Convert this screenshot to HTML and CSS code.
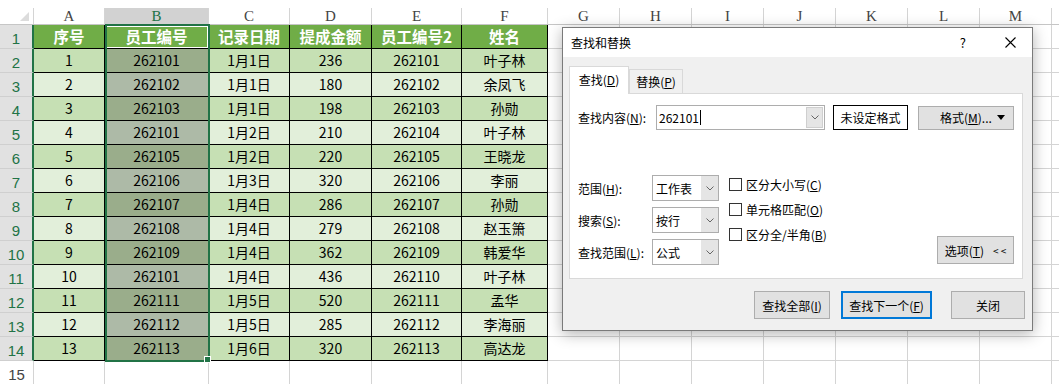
FILE: index.html
```html
<!DOCTYPE html>
<html lang="zh-CN">
<head>
    <meta charset="UTF-8">
    <title>查找和替换</title>
    <link rel="stylesheet" href="styles.css">
</head>
<body>

<div class="sheet">
    <!-- column letters -->
    <div class="colheads">
        <div class="corner"></div>
        <div class="ch w-a">A</div>
        <div class="ch w-b on">B</div>
        <div class="ch w-c">C</div>
        <div class="ch w-d">D</div>
        <div class="ch w-e">E</div>
        <div class="ch w-f">F</div>
        <div class="ch w-g">G</div>
        <div class="ch w-g">H</div>
        <div class="ch w-g">I</div>
        <div class="ch w-g">J</div>
        <div class="ch w-g">K</div>
        <div class="ch w-g">L</div>
        <div class="ch w-g">M</div>
    </div>

    <div class="row head">
        <div class="rh">1</div>
        <div class="c w-a">序号</div>
        <div class="c w-b active">员工编号</div>
        <div class="c w-c">记录日期</div>
        <div class="c w-d">提成金额</div>
        <div class="c w-e">员工编号2</div>
        <div class="c w-f">姓名</div>
        <div class="rest"></div>
    </div>
    <div class="row dk">
        <div class="rh">2</div>
        <div class="c w-a">1</div><div class="c w-b sel">262101</div><div class="c w-c">1月1日</div>
        <div class="c w-d">236</div><div class="c w-e">262101</div><div class="c w-f">叶子林</div>
        <div class="rest"></div>
    </div>
    <div class="row lt">
        <div class="rh">3</div>
        <div class="c w-a">2</div><div class="c w-b sel">262102</div><div class="c w-c">1月1日</div>
        <div class="c w-d">180</div><div class="c w-e">262102</div><div class="c w-f">余凤飞</div>
        <div class="rest"></div>
    </div>
    <div class="row dk">
        <div class="rh">4</div>
        <div class="c w-a">3</div><div class="c w-b sel">262103</div><div class="c w-c">1月1日</div>
        <div class="c w-d">198</div><div class="c w-e">262103</div><div class="c w-f">孙勋</div>
        <div class="rest"></div>
    </div>
    <div class="row lt">
        <div class="rh">5</div>
        <div class="c w-a">4</div><div class="c w-b sel">262101</div><div class="c w-c">1月2日</div>
        <div class="c w-d">210</div><div class="c w-e">262104</div><div class="c w-f">叶子林</div>
        <div class="rest"></div>
    </div>
    <div class="row dk">
        <div class="rh">6</div>
        <div class="c w-a">5</div><div class="c w-b sel">262105</div><div class="c w-c">1月2日</div>
        <div class="c w-d">220</div><div class="c w-e">262105</div><div class="c w-f">王晓龙</div>
        <div class="rest"></div>
    </div>
    <div class="row lt">
        <div class="rh">7</div>
        <div class="c w-a">6</div><div class="c w-b sel">262106</div><div class="c w-c">1月3日</div>
        <div class="c w-d">320</div><div class="c w-e">262106</div><div class="c w-f">李丽</div>
        <div class="rest"></div>
    </div>
    <div class="row dk">
        <div class="rh">8</div>
        <div class="c w-a">7</div><div class="c w-b sel">262107</div><div class="c w-c">1月4日</div>
        <div class="c w-d">286</div><div class="c w-e">262107</div><div class="c w-f">孙勋</div>
        <div class="rest"></div>
    </div>
    <div class="row lt">
        <div class="rh">9</div>
        <div class="c w-a">8</div><div class="c w-b sel">262108</div><div class="c w-c">1月4日</div>
        <div class="c w-d">279</div><div class="c w-e">262108</div><div class="c w-f">赵玉箫</div>
        <div class="rest"></div>
    </div>
    <div class="row dk">
        <div class="rh">10</div>
        <div class="c w-a">9</div><div class="c w-b sel">262109</div><div class="c w-c">1月4日</div>
        <div class="c w-d">362</div><div class="c w-e">262109</div><div class="c w-f">韩爱华</div>
        <div class="rest"></div>
    </div>
    <div class="row lt">
        <div class="rh">11</div>
        <div class="c w-a">10</div><div class="c w-b sel">262101</div><div class="c w-c">1月4日</div>
        <div class="c w-d">436</div><div class="c w-e">262110</div><div class="c w-f">叶子林</div>
        <div class="rest"></div>
    </div>
    <div class="row dk">
        <div class="rh">12</div>
        <div class="c w-a">11</div><div class="c w-b sel">262111</div><div class="c w-c">1月5日</div>
        <div class="c w-d">520</div><div class="c w-e">262111</div><div class="c w-f">孟华</div>
        <div class="rest"></div>
    </div>
    <div class="row lt">
        <div class="rh">13</div>
        <div class="c w-a">12</div><div class="c w-b sel">262112</div><div class="c w-c">1月5日</div>
        <div class="c w-d">285</div><div class="c w-e">262112</div><div class="c w-f">李海丽</div>
        <div class="rest"></div>
    </div>
    <div class="row dk">
        <div class="rh">14</div>
        <div class="c w-a">13</div><div class="c w-b sel">262113</div><div class="c w-c">1月6日</div>
        <div class="c w-d">320</div><div class="c w-e">262113</div><div class="c w-f">高达龙</div>
        <div class="rest"></div>
    </div>
    <div class="row blank">
        <div class="rh">15</div>
        <div class="c w-a"></div><div class="c w-b"></div><div class="c w-c"></div>
        <div class="c w-d"></div><div class="c w-e"></div><div class="c w-f"></div>
        <div class="rest"></div>
    </div>

    <!-- selected range B1:B14 -->
    <div class="selection"><span class="handle"></span></div>
</div>

<div class="dialog">
    <div class="titlebar">
        <span class="title">查找和替换</span>
        <span class="help">?</span>
        <svg class="close" width="11" height="11" viewBox="0 0 11 11"><path d="M0.5 0.5L10.5 10.5M10.5 0.5L0.5 10.5" stroke="#000" stroke-width="1.1" fill="none"/></svg>
    </div>
    <div class="dbody">
        <div class="tabs">
            <div class="tab active">查找(<u>D</u>)</div>
            <div class="tab">替换(<u>P</u>)</div>
        </div>
        <div class="panel">
            <div class="find-row">
                <span class="lbl">查找内容(<u>N</u>):</span>
                <div class="combo wide">
                    <span class="val">262101<i class="caret"></i></span>
                    <span class="drop"><svg width="8" height="5" viewBox="0 0 8 5"><path d="M0.5 0.5L4 4L7.5 0.5" fill="none" stroke="#666"/></svg></span>
                </div>
                <div class="fmt-box">未设定格式</div>
                <div class="btn fmt-btn">
                    <span>格式(<u>M</u>)...</span>
                    <svg width="8" height="5" viewBox="0 0 8 5"><path d="M0 0H8L4 5Z" fill="#000"/></svg>
                </div>
            </div>

            <div class="opts">
                <div class="combos">
                    <span class="lbl">范围(<u>H</u>):</span>
                    <div class="combo"><span class="val">工作表</span><span class="drop"><svg width="8" height="5" viewBox="0 0 8 5"><path d="M0.5 0.5L4 4L7.5 0.5" fill="none" stroke="#666"/></svg></span></div>
                    <span class="lbl">搜索(<u>S</u>):</span>
                    <div class="combo"><span class="val">按行</span><span class="drop"><svg width="8" height="5" viewBox="0 0 8 5"><path d="M0.5 0.5L4 4L7.5 0.5" fill="none" stroke="#666"/></svg></span></div>
                    <span class="lbl">查找范围(<u>L</u>):</span>
                    <div class="combo"><span class="val">公式</span><span class="drop"><svg width="8" height="5" viewBox="0 0 8 5"><path d="M0.5 0.5L4 4L7.5 0.5" fill="none" stroke="#666"/></svg></span></div>
                </div>
                <div class="checks">
                    <div class="check"><span class="box"></span><span>区分大小写(<u>C</u>)</span></div>
                    <div class="check"><span class="box"></span><span>单元格匹配(<u>O</u>)</span></div>
                    <div class="check"><span class="box"></span><span>区分全/半角(<u>B</u>)</span></div>
                </div>
                <div class="btn more"><span>选项(<u>T</u>)</span><span class="arrows">&lt; &lt;</span></div>
            </div>
        </div>
        <div class="actions">
            <div class="btn b1"><span>查找全部(<u>I</u>)</span></div>
            <div class="btn b2 default"><span>查找下一个(<u>F</u>)</span></div>
            <div class="btn b3">关闭</div>
        </div>
    </div>
</div>

</body>
</html>
```

FILE: styles.css
```css
* {
    box-sizing: border-box;
}
body {
    margin: 0;
    width: 1059px;
    height: 384px;
    overflow: hidden;
    position: relative;
    background: #fff;
    font-family: "Noto Sans CJK SC", sans-serif;
}

/* ---- sheet ---- */
.sheet {
    position: relative;
    padding-top: 8px;
}
.colheads {
    display: flex;
    height: 17px;
    border-bottom: 1px solid #c6c6c6;
}
.corner {
    width: 34px;
    position: relative;
    border-right: 1px solid #d4d4d4;
}
.corner::after {
    content: "";
    position: absolute;
    right: 4px;
    bottom: 3px;
    border-left: 9px solid transparent;
    border-bottom: 9px solid #dcdcdc;
}
.ch {
    text-align: center;
    font-family: "Liberation Serif", serif;
    font-size: 15px;
    line-height: 17px;
    color: #444;
    border-right: 1px solid #d4d4d4;
}
.ch.on {
    background: #d2d2d2;
    color: #217346;
}
.w-a { width: 71px; }
.w-b { width: 104px; }
.w-c { width: 81px; }
.w-d { width: 82px; }
.w-e { width: 90px; }
.w-f { width: 86px; }
.w-g { width: 72px; }

.row {
    display: flex;
    height: 24px;
}
.rh {
    width: 34px;
    background: #e1e1e1;
    color: #217346;
    border-right: 2px solid #217346;
    border-bottom: 1px solid #cfcfcf;
    text-align: center;
    font-family: "Liberation Sans", sans-serif;
    font-size: 15px;
    line-height: 27px;
}
.c {
    border-right: 1px solid #000;
    border-bottom: 1px solid #000;
    text-align: center;
    font-size: 14px;
    line-height: 23px;
    color: #000;
    white-space: nowrap;
}
.head .c {
    background: #70ad47;
    color: #fff;
    font-weight: bold;
    font-size: 15.5px;
}
.head .c.active {
    outline: 1px solid #fff;
    outline-offset: -2px;
}
.dk .c { background: #c6e0b4; }
.lt .c { background: #e2efda; }
.dk .c.sel { background: #9aad8b; }
.lt .c.sel { background: #adbaa7; }

.blank .rh {
    background: #fff;
    color: #444;
    border-right: 1px solid #d4d4d4;
    border-bottom: none;
}
.blank .c {
    background: #fff;
    border-color: #d4d4d4;
}
.rest {
    flex: 1;
    border-bottom: 1px solid #d4d4d4;
    background-image: linear-gradient(to right, transparent 71px, #d4d4d4 71px);
    background-size: 72px 100%;
}

.selection {
    position: absolute;
    left: 105px;
    top: 24px;
    width: 105px;
    height: 338px;
    border: 2px solid #217346;
}
.handle {
    position: absolute;
    right: -3px;
    bottom: -3px;
    width: 7px;
    height: 7px;
    background: #217346;
    border: 1px solid #fff;
}

/* ---- find & replace dialog ---- */
.dialog {
    position: absolute;
    left: 562px;
    top: 27px;
    width: 471px;
    height: 304px;
    border: 1px solid #7a7a7a;
    background: #f0f0f0;
    box-shadow: 0 3px 14px rgba(0, 0, 0, 0.3);
    font-size: 12px;
    color: #000;
    display: flex;
    flex-direction: column;
}
.titlebar {
    height: 29px;
    background: #fff;
    display: flex;
    align-items: center;
    padding: 0 16px 0 8px;
}
.help {
    margin-left: auto;
    margin-right: 39px;
    font-size: 13px;
}
.dbody {
    flex: 1;
    padding: 9px 7px 0 6px;
}
.tabs {
    display: flex;
    align-items: flex-end;
    height: 28px;
    position: relative;
    z-index: 1;
    margin-bottom: -1px;
}
.tab {
    width: 54px;
    height: 24px;
    margin-bottom: 1px;
    border: 1px solid #d9d9d9;
    border-bottom: none;
    text-align: center;
    line-height: 23px;
}
.tab.active {
    width: 60px;
    height: 28px;
    margin-bottom: 0;
    background: #fff;
    line-height: 26px;
}
.panel {
    width: 454px;
    height: 186px;
    background: #fff;
    border: 1px solid #d9d9d9;
}
.find-row {
    display: flex;
    align-items: center;
    height: 25px;
    margin-top: 11px;
    padding-left: 8px;
}
.find-row .lbl {
    width: 78px;
}
.combo {
    display: flex;
    border: 1px solid #adadad;
    background: #fff;
}
.combo .val {
    flex: 1;
    padding-left: 3px;
    display: flex;
    align-items: center;
    white-space: nowrap;
}
.combo .drop {
    width: 17px;
    background: #e5e5e5;
    display: flex;
    align-items: center;
    justify-content: center;
}
.combo.wide {
    width: 169px;
    height: 25px;
}
.combo.wide .val {
    padding-left: 2px;
}
.combo.wide .drop {
    margin: 1px;
    border: 1px solid #cfcfcf;
}
.caret {
    display: inline-block;
    width: 1px;
    height: 15px;
    margin-left: 1px;
    background: #000;
}
.fmt-box {
    margin-left: 8px;
    width: 75px;
    height: 25px;
    border: 1px solid #000;
    text-align: center;
    line-height: 23px;
}
.btn {
    background: #e1e1e1;
    border: 1px solid #adadad;
    display: flex;
    align-items: center;
    justify-content: center;
    white-space: nowrap;
}
.fmt-btn {
    margin-left: 10px;
    width: 96px;
    height: 24px;
    justify-content: space-between;
    padding: 0 8px 0 21px;
}
.opts {
    display: flex;
    margin-top: 45px;
    padding-left: 8px;
}
.combos {
    display: grid;
    grid-template-columns: 74px 67px;
    grid-auto-rows: 26px;
    row-gap: 6px;
    align-items: center;
}
.combos .combo {
    height: 26px;
}
.checks {
    margin-left: 10px;
    margin-top: 3px;
    display: flex;
    flex-direction: column;
    gap: 12px;
}
.check {
    height: 13px;
    display: flex;
    align-items: center;
    gap: 4px;
    white-space: nowrap;
}
.box {
    width: 13px;
    height: 13px;
    border: 1px solid #333;
    background: #fff;
}
.more {
    margin-left: auto;
    margin-right: 8px;
    margin-bottom: 1px;
    align-self: flex-end;
    width: 77px;
    height: 28px;
}
.more .arrows {
    margin-left: 9px;
    font-size: 10px;
}
.actions {
    display: flex;
    justify-content: flex-end;
    margin-top: 12px;
}
.actions .btn {
    height: 28px;
}
.b1 { width: 76px; }
.b2 { width: 91px; margin-left: 11px; }
.b3 { width: 74px; margin-left: 19px; }
.default {
    border: 2px solid #0078d7;
}
```
